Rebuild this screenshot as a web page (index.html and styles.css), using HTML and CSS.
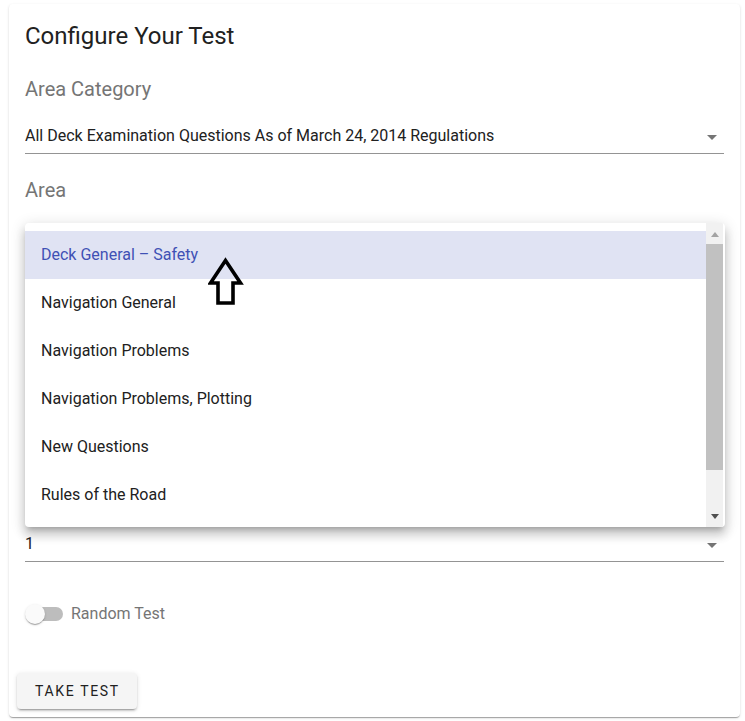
FILE: index.html
```html
<!DOCTYPE html>
<html lang="en">
<head>
<meta charset="utf-8">
<title>Configure Your Test</title>
<link rel="stylesheet" href="styles.css">
</head>
<body>
<div class="page">
  <div class="card">
    <div class="card-content">
      <h2 class="title">Configure Your Test</h2>

      <div class="field-label">Area Category</div>
      <div class="select">
        <span class="select-value">All Deck Examination Questions As of March 24, 2014 Regulations</span>
        <span class="select-arrow"></span>
      </div>

      <div class="field-label gap">Area</div>
      <div class="area-field">
        <div class="select flush">
          <span class="select-value"></span>
          <span class="select-arrow"></span>
        </div>

        <div class="menu">
          <ul class="menu-list">
            <li class="option active">Deck General – Safety</li>
            <li class="option">Navigation General</li>
            <li class="option">Navigation Problems</li>
            <li class="option">Navigation Problems, Plotting</li>
            <li class="option">New Questions</li>
            <li class="option">Rules of the Road</li>
          </ul>
          <div class="scrollbar">
            <div class="sb-btn sb-up"><span class="tri-up"></span></div>
            <div class="sb-thumb"></div>
            <div class="sb-track"></div>
            <div class="sb-btn sb-down"><span class="tri-down"></span></div>
          </div>
        </div>

        <svg class="cursor-arrow" width="36" height="50" viewBox="0 0 36 50" aria-hidden="true">
          <polygon points="17.5,3.5 32.5,26 25,26 25,46 10,46 10,26 2.5,26" fill="none" stroke="#000" stroke-width="3.6" stroke-linejoin="miter"/>
        </svg>
      </div>

      <div class="select test-number">
        <span class="select-value">1</span>
        <span class="select-arrow"></span>
      </div>

      <label class="toggle">
        <span class="toggle-track"><span class="toggle-thumb"></span></span>
        <span class="toggle-label">Random Test</span>
      </label>
    </div>

    <div class="card-actions">
      <button class="btn">TAKE TEST</button>
    </div>
  </div>
</div>
</body>
</html>
```

FILE: styles.css
```css
* { box-sizing: border-box; }

html, body {
  margin: 0;
  padding: 0;
  background: #ffffff;
}

body {
  font-family: Roboto, "Liberation Sans", Arial, sans-serif;
  color: rgba(0, 0, 0, 0.87);
}

.page {
  padding: 4px 5px 4px 9px;
}

.card {
  background: #fff;
  border-radius: 4px;
  box-shadow: 0 2px 1px -1px rgba(0,0,0,.2), 0 1px 1px 0 rgba(0,0,0,.14), 0 1px 3px 0 rgba(0,0,0,.12);
  height: 713px;
  display: flex;
  flex-direction: column;
}

.card-content {
  padding: 16px 16px 0 16px;
  display: flex;
  flex-direction: column;
}

.title {
  margin: 0;
  font-size: 24px;
  line-height: 32px;
  font-weight: 400;
  color: #212121;
}

.field-label {
  margin-top: 23px;
  font-size: 20px;
  line-height: 28px;
  color: #757575;
}

.field-label.gap {
  margin-top: 22px;
}

.select {
  margin-top: 14px;
  display: flex;
  align-items: center;
  padding: 7px 0 5px 0;
  border-bottom: 1px solid #949494;
  font-size: 16px;
  line-height: 24px;
  color: #212121;
}

.select.flush {
  margin-top: 0;
}

.select-value {
  flex: 1;
  min-height: 24px;
  white-space: nowrap;
  overflow: hidden;
}

.select-arrow {
  width: 0;
  height: 0;
  margin-right: 7px;
  border-left: 5px solid transparent;
  border-right: 5px solid transparent;
  border-top: 5px solid #757575;
  margin-top: 2px;
}

.area-field {
  position: relative;
  margin-top: 14px;
}

.menu {
  position: absolute;
  left: 0;
  right: -1px;
  top: 5px;
  height: 304px;
  background: #fff;
  border-radius: 4px;
  overflow: hidden;
  display: flex;
  box-shadow: 0 5px 5px -3px rgba(0,0,0,.2), 0 8px 10px 1px rgba(0,0,0,.14), 0 3px 14px 2px rgba(0,0,0,.12);
  z-index: 2;
}

.menu-list {
  list-style: none;
  margin: 0;
  padding: 8px 0;
  flex: 1;
  overflow: hidden;
}

.option {
  height: 48px;
  line-height: 48px;
  padding: 0 16px;
  font-size: 16px;
  color: #212121;
  white-space: nowrap;
}

.option.active {
  background: #e0e3f3;
  color: #3f51b5;
}

.scrollbar {
  width: 17px;
  background: #f1f1f1;
  display: flex;
  flex-direction: column;
  margin-right: 2px;
}

.sb-btn {
  display: flex;
  align-items: center;
  justify-content: center;
}

.sb-up { height: 21px; padding-top: 2px; }
.sb-down { height: 17px; padding-bottom: 4px; }

.sb-thumb {
  height: 226px;
  background: #c1c1c1;
}

.sb-track { flex: 1; }

.tri-up {
  width: 0; height: 0;
  border-left: 4.5px solid transparent;
  border-right: 4.5px solid transparent;
  border-bottom: 5px solid #a3a3a3;
}

.tri-down {
  width: 0; height: 0;
  border-left: 4.5px solid transparent;
  border-right: 4.5px solid transparent;
  border-top: 5px solid #505050;
}

.cursor-arrow {
  position: absolute;
  left: 183px;
  top: 39px;
  z-index: 3;
}

.test-number {
  margin-top: 270px;
}

.toggle {
  margin-top: 40px;
  display: flex;
  align-items: center;
  height: 24px;
  cursor: pointer;
}

.toggle-track {
  position: relative;
  width: 36px;
  height: 14px;
  margin-left: 2px;
  border-radius: 7px;
  background: #bdbdbd;
}

.toggle-thumb {
  position: absolute;
  left: -2px;
  top: -3px;
  width: 20px;
  height: 20px;
  border-radius: 50%;
  background: #fafafa;
  box-shadow: 0 2px 1px -1px rgba(0,0,0,.2), 0 1px 1px 0 rgba(0,0,0,.14), 0 1px 3px 0 rgba(0,0,0,.12);
}

.toggle-label {
  margin-left: 8px;
  font-size: 16px;
  line-height: 24px;
  color: #757575;
}

.card-actions {
  margin-top: auto;
  padding: 8px;
}

.btn {
  height: 36px;
  padding: 0 17px 0 18px;
  border: none;
  border-radius: 4px;
  background: #f5f5f5;
  color: #212121;
  font-family: Roboto, "Liberation Sans", Arial, sans-serif;
  font-size: 14px;
  letter-spacing: 1.65px;
  font-weight: 400;
  box-shadow: 0 3px 1px -2px rgba(0,0,0,.2), 0 2px 2px 0 rgba(0,0,0,.14), 0 1px 5px 0 rgba(0,0,0,.12);
  cursor: pointer;
}
```
